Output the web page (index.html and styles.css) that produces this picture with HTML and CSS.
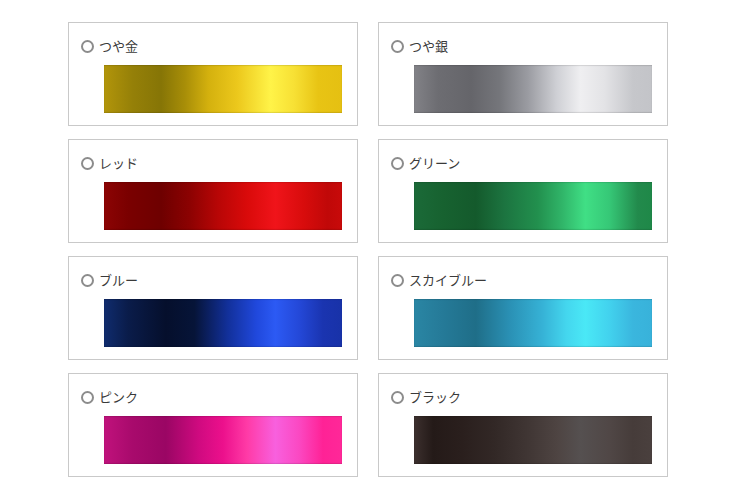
FILE: index.html
```html
<!DOCTYPE html>
<html lang="ja">
<head>
    <meta charset="UTF-8">
    <meta name="viewport" content="width=device-width, initial-scale=1.0">
    <title>カラー選択</title>
    <link rel="stylesheet" href="styles.css">
</head>
<body>

    <!-- Color Options -->
    <section class="color-options">
        <label class="color-card">
            <span class="color-name"><input type="radio" name="color" value="gold"> つや金</span>
            <span class="swatch swatch-gold"></span>
        </label>
        <label class="color-card">
            <span class="color-name"><input type="radio" name="color" value="silver"> つや銀</span>
            <span class="swatch swatch-silver"></span>
        </label>
        <label class="color-card">
            <span class="color-name"><input type="radio" name="color" value="red"> レッド</span>
            <span class="swatch swatch-red"></span>
        </label>
        <label class="color-card">
            <span class="color-name"><input type="radio" name="color" value="green"> グリーン</span>
            <span class="swatch swatch-green"></span>
        </label>
        <label class="color-card">
            <span class="color-name"><input type="radio" name="color" value="blue"> ブルー</span>
            <span class="swatch swatch-blue"></span>
        </label>
        <label class="color-card">
            <span class="color-name"><input type="radio" name="color" value="skyblue"> スカイブルー</span>
            <span class="swatch swatch-skyblue"></span>
        </label>
        <label class="color-card">
            <span class="color-name"><input type="radio" name="color" value="pink"> ピンク</span>
            <span class="swatch swatch-pink"></span>
        </label>
        <label class="color-card">
            <span class="color-name"><input type="radio" name="color" value="black"> ブラック</span>
            <span class="swatch swatch-black"></span>
        </label>
    </section>

</body>
</html>
```

FILE: styles.css
```css
/* General Styles */
body {
    margin: 0;
    font-family: "Noto Sans CJK JP", "Noto Sans", sans-serif;
    color: #333;
    background-color: #fff;
}

/* Color Options Grid */
.color-options {
    display: grid;
    grid-template-columns: 290px 290px;
    column-gap: 20px;
    row-gap: 13px;
    padding: 22px 0 0 68px;
}

.color-card {
    display: flex;
    flex-direction: column;
    box-sizing: border-box;
    height: 104px;
    padding: 14px 14px 0 12px;
    border: 1px solid #c9c9c9;
    background: #fff;
    cursor: pointer;
}

.color-name {
    display: flex;
    align-items: center;
    gap: 5px;
    height: 20px;
    margin-top: -1px;
    margin-bottom: 1px;
    font-size: 13px;
    line-height: 20px;
    color: #3a3a3a;
}

/* Custom radio */
.color-name input[type="radio"] {
    appearance: none;
    -webkit-appearance: none;
    margin: 0;
    width: 13px;
    height: 13px;
    border: 2px solid #8c8c8c;
    border-radius: 50%;
    box-sizing: border-box;
    flex-shrink: 0;
}

.color-name input[type="radio"]:checked {
    background: radial-gradient(circle, #666 0 3px, transparent 3.5px);
}

.swatch {
    display: block;
    width: 238px;
    height: 48px;
    margin: 8px 0 0 23px;
    box-shadow: inset 0 1px 1px rgba(0, 0, 0, 0.12), inset 0 -1px 1px rgba(0, 0, 0, 0.12);
}

.swatch-gold {
    background: linear-gradient(90deg, #b2950a 0%, #958008 12%, #867506 24%, #a88e08 34%, #d4b10e 44%, #ecc81c 56%, #fff348 70%, #f7e034 80%, #e8c414 90%, #e5c012 100%);
}

.swatch-silver {
    background: linear-gradient(90deg, #828287 0%, #6d6d72 10%, #65656a 24%, #75767b 36%, #9b9ca2 48%, #cfd0d5 60%, #efeff1 70%, #e3e3e6 80%, #c6c7cb 92%, #c3c4c8 100%);
}

.swatch-red {
    background: linear-gradient(90deg, #8c0404 0%, #7a0000 10%, #6e0000 24%, #8c0202 36%, #b80606 48%, #d90a0a 60%, #f0141a 72%, #d80c0c 84%, #c00808 94%, #c80a0a 100%);
}

.swatch-green {
    background: linear-gradient(90deg, #1b6a38 0%, #176230 12%, #145a2c 26%, #1c7440 38%, #22904e 52%, #30b468 62%, #40df85 72%, #36c877 82%, #228a4c 94%, #1f8848 100%);
}

.swatch-blue {
    background: linear-gradient(90deg, #102c6e 0%, #0a1c4a 10%, #050f2c 26%, #061438 38%, #12309a 52%, #2048dc 64%, #2c5af4 72%, #2448d8 82%, #1a34b0 92%, #1832a8 100%);
}

.swatch-skyblue {
    background: linear-gradient(90deg, #2a86a4 0%, #257a98 12%, #1f6e88 26%, #2a90b4 40%, #36b2d6 54%, #44d6ee 64%, #4ae8f6 72%, #42d2ee 82%, #3ab6de 92%, #38b2da 100%);
}

.swatch-pink {
    background: linear-gradient(90deg, #c0127c 0%, #a80a6c 12%, #9a0664 26%, #d00a80 40%, #ec108c 50%, #ff3aa6 60%, #f860de 72%, #fb48c2 82%, #ff2296 92%, #ff2898 100%);
}

.swatch-black {
    background: linear-gradient(90deg, #3c302e 0%, #241a18 8%, #2a1f1d 20%, #322826 34%, #403634 48%, #4e4442 60%, #555050 70%, #504746 82%, #463c3a 92%, #4a403e 100%);
}
```
